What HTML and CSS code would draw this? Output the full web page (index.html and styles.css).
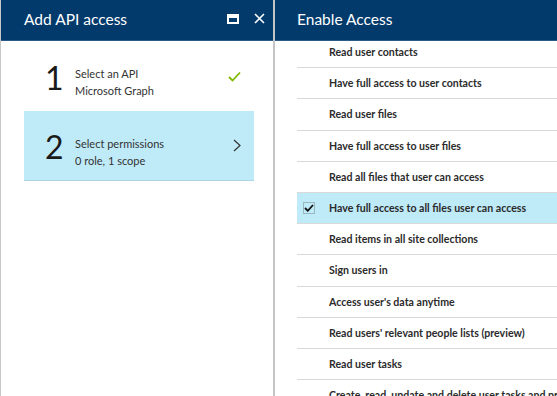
FILE: index.html
```html
<!DOCTYPE html>
<html lang="en">
<head>
    <meta charset="UTF-8">
    <title>Add API access</title>
    <link rel="stylesheet" href="styles.css">
</head>
<body>

    <div class="blade blade-left">
        <div class="blade-header">
            <h2>Add API access</h2>
            <div class="header-icons">
                <svg width="12" height="10" viewBox="0 0 12 10"><rect x="1" y="1" width="10" height="8" fill="none" stroke="#fff" stroke-width="2"/><rect x="1" y="1" width="10" height="3" fill="#fff"/></svg>
                <svg width="11" height="11" viewBox="0 0 11 11"><path d="M1 1 L10 10 M10 1 L1 10" stroke="#fff" stroke-width="1.6"/></svg>
            </div>
        </div>
        <div class="blade-body">
            <div class="step">
                <div class="num">1</div>
                <div class="step-text">
                    <div>Select an API</div>
                    <div>Microsoft Graph</div>
                </div>
                <svg class="step-icon" width="13" height="11" viewBox="0 0 13 11"><path d="M1 6 L4.5 9.5 L12 1.5" fill="none" stroke="#7fba00" stroke-width="1.8"/></svg>
            </div>
            <div class="step active">
                <div class="num">2</div>
                <div class="step-text">
                    <div>Select permissions</div>
                    <div>0 role, 1 scope</div>
                </div>
                <svg class="step-icon" width="8" height="13" viewBox="0 0 8 13"><path d="M1 1 L7 6.5 L1 12" fill="none" stroke="#333" stroke-width="1.2"/></svg>
            </div>
        </div>
    </div>

    <div class="blade blade-right">
        <div class="blade-header">
            <h2>Enable Access</h2>
        </div>
        <div class="blade-body">
            <ul class="perm-list">
                <li><span class="box"></span>Read user contacts</li>
                <li><span class="box"></span>Have full access to user contacts</li>
                <li><span class="box"></span>Read user files</li>
                <li><span class="box"></span>Have full access to user files</li>
                <li><span class="box"></span>Read all files that user can access</li>
                <li class="checked"><span class="box"><svg width="10" height="8" viewBox="0 0 10 8"><path d="M1 4 L3.8 6.8 L9 1" fill="none" stroke="#111" stroke-width="1.8"/></svg></span>Have full access to all files user can access</li>
                <li><span class="box"></span>Read items in all site collections</li>
                <li><span class="box"></span>Sign users in</li>
                <li><span class="box"></span>Access user's data anytime</li>
                <li><span class="box"></span>Read users' relevant people lists (preview)</li>
                <li><span class="box"></span>Read user tasks</li>
                <li><span class="box"></span>Create, read, update and delete user tasks and projects</li>
            </ul>
        </div>
    </div>

</body>
</html>
```

FILE: styles.css
```css
/* base */
body {
    margin: 0;
    display: flex;
    height: 396px;
    overflow: hidden;
    font-family: Lato, "Liberation Sans", sans-serif;
    color: #222;
    background: #fff;
}

.blade {
    display: flex;
    flex-direction: column;
    height: 100%;
    overflow: hidden;
}

.blade-left {
    width: 272px;
    flex: none;
    border-left: 1px solid #c8c8c8;
    border-right: 2px solid #c4c4c4;
}

.blade-right {
    flex: 1;
    min-width: 0;
}

/* header bar */
.blade-header {
    height: 41px;
    flex: none;
    background: #023a6c;
    border-bottom: 1px solid #2c5b86;
    box-sizing: border-box;
    display: flex;
    align-items: center;
    padding: 0 0 0 23px;
    position: relative;
    z-index: 2;
}

.blade-header h2 {
    margin: 0;
    flex: 1;
    font-size: 15.5px;
    font-weight: 400;
    color: #fff;
    padding-bottom: 3px;
}

.blade-right .blade-header { padding-left: 22px; }

.header-icons {
    display: flex;
    align-items: center;
    gap: 15px;
    padding-right: 8px;
    margin-top: -3px;
}
.header-icons svg { display: block; }

/* left steps */
.blade-left .blade-body {
    padding: 0 19px 0 23px;
}

.step {
    display: flex;
    align-items: center;
    height: 70px;
    padding: 0 13px 0 21px;
}

.step.active {
    background: #bfeaf8;
    border-bottom: 1px solid #aad6e6;
    box-sizing: border-box;
}

.num {
    width: 30px;
    font-size: 32px;
    font-weight: 400;
    color: #1a1a1a;
    margin-top: 2px;
}

.step-text {
    flex: 1;
    font-size: 11px;
    line-height: 17px;
    color: #333;
    margin-top: 12px;
}

.step-icon { display: block; }

/* permission list */
.blade-right .blade-body {
    padding-left: 22px;
}

.perm-list {
    list-style: none;
    margin: -4px 0 0;
    padding: 0;
}

.perm-list li {
    height: 30.2px;
    border-bottom: 1px solid #d9d9d9;
    display: flex;
    align-items: center;
    font-size: 10.6px;
    font-weight: 700;
    color: #2b2b2b;
    white-space: nowrap;
    overflow: hidden;
}

.perm-list li.checked { background: #bfeaf8; }

.box {
    flex: none;
    box-sizing: border-box;
    width: 12px;
    height: 12px;
    margin: 0 14px 0 6px;
    display: flex;
    align-items: center;
    justify-content: center;
    visibility: hidden;
}

.checked .box {
    visibility: visible;
    border: 1px solid #9bb5bf;
}
```
